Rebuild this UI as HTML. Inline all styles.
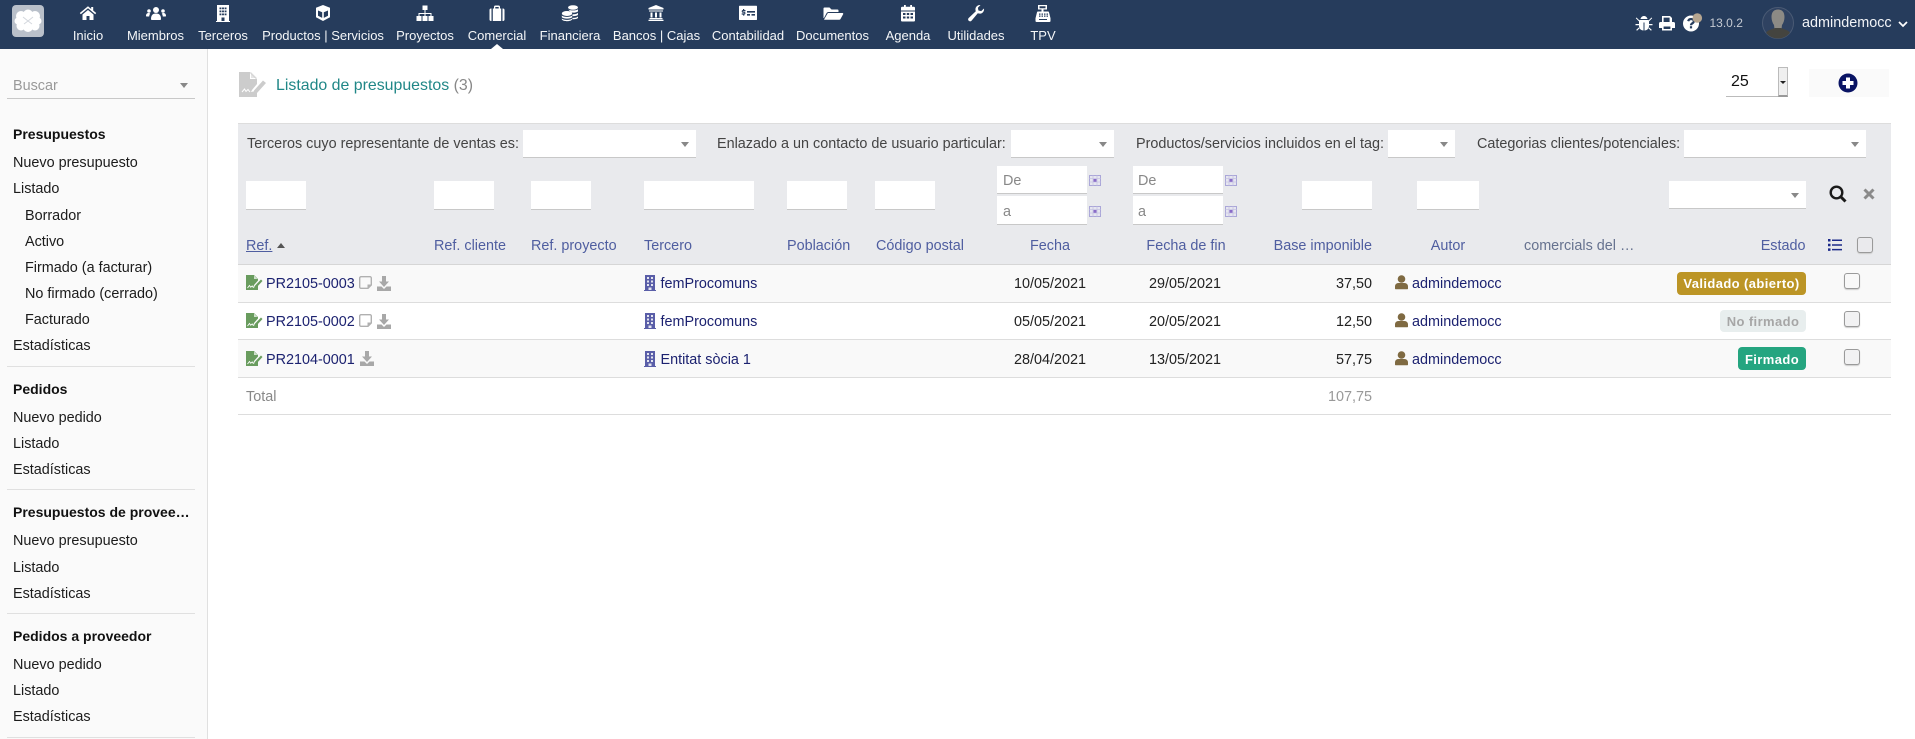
<!DOCTYPE html>
<html lang="es"><head><meta charset="utf-8"><title>Listado de presupuestos</title>
<style>
html,body{margin:0;padding:0;background:#fff}
#p{position:relative;width:1915px;height:739px;overflow:hidden;font-family:"Liberation Sans",sans-serif;font-size:14.4px;color:#222;background:#fff}
.a{position:absolute}
.t{position:absolute;white-space:nowrap;line-height:20px;height:20px;margin-top:1px}
.n{color:#f4f6f8;font-size:13px;transform:translateX(-50%);top:26px;margin-top:0}
.i{position:absolute}
.s{color:#1b1b1b;left:13px}.s2{color:#1b1b1b;left:25px}.b{font-weight:bold;color:#111;left:13px;font-size:14px;margin-top:0}
.sep{position:absolute;left:7px;width:188px;height:1px;background:#e0e0e0}
.inp{position:absolute;background:#fff;border-bottom:1px solid #c8c8c8;box-sizing:border-box}
.ar{position:absolute;width:0;height:0;border-left:4px solid transparent;border-right:4px solid transparent;border-top:5px solid #888}
.h{color:#4f5ea0}
.lnk{color:#1c2270}
.c{transform:translateX(-50%)}.r{transform:translateX(-100%)}
.cb{position:absolute;width:14px;height:14px;border:1px solid #9a9a9a;border-radius:3px;background:#f2f2f3;box-shadow:0 1px 1px #ccc}
.bd{position:absolute;box-sizing:border-box;border-radius:4px;font-weight:bold;font-size:13px;letter-spacing:.4px;text-align:center;color:#fff}
.ph{color:#888}
</style></head><body><div id="p">

<!-- top bar -->
<div class="a" style="left:0;top:0;width:1915px;height:49px;background:#263c5c"></div>
<svg class="i" style="left:12px;top:5px" width="32" height="32" viewBox="0 0 32 32"><rect width="32" height="32" rx="4" fill="#b9c0ca"/><g fill="#fff"><circle cx="9" cy="11" r="5"/><circle cx="16" cy="9.500" r="5"/><circle cx="23" cy="11" r="5"/><circle cx="26" cy="16" r="3.500"/><circle cx="6" cy="16" r="3.500"/><circle cx="9" cy="21" r="4.500"/><circle cx="16" cy="22" r="5"/><circle cx="23" cy="21" r="4.500"/><rect x="8" y="10" width="16" height="12"/></g><path d="M11 12l5 4 5-4M12 19l4-3 4 3" fill="none" stroke="#d4d8de" stroke-width="1"/></svg>

<svg class="i" style="left:78px;top:3px" width="20" height="20" viewBox="0 0 20 20" fill="#fff"><path d="M10 3.200L1.800 10l1 1.200L10 5.300l7.200 5.900 1-1.200-3-2.500V4h-2v2z"/><path d="M4.500 11.500L10 7l5.500 4.500V17h-4v-4h-3v4h-4z"/></svg>
<svg class="i" style="left:145px;top:3px" width="22" height="20" viewBox="0 0 22 20" fill="#fff"><circle cx="11" cy="7" r="3"/><circle cx="4" cy="8" r="1.800"/><circle cx="18" cy="8" r="1.800"/><path d="M6 16c0-4 2-5.500 5-5.500s5 1.500 5 5.500c0 .7-.5 1-1 1H7c-.5 0-1-.3-1-1z"/><path d="M1 13c0-2 1-3 2.500-3 .7 0 1.200.2 1.700.6C4.500 11.500 4.300 12.500 4.200 13.500H2c-.6 0-1-.2-1-.5zM21 13c0-2-1-3-2.500-3-.7 0-1.200.2-1.700.6.700.9.900 1.900 1 2.900H20c.6 0 1-.2 1-.5z"/></svg>
<svg class="i" style="left:213px;top:3px" width="20" height="20" viewBox="0 0 20 20"><path fill="#fff" d="M4 2h12v16h1v1H3v-1h1z"/><path fill="#263c5c" d="M6.500 4.500h1.900v1.800H6.500zM9.050 4.500h1.900v1.800H9.050zM11.600 4.500h1.900v1.800h-1.900zM6.500 7.500h1.900v1.800H6.500zM9.050 7.500h1.900v1.800H9.050zM11.600 7.500h1.900v1.800h-1.900zM6.500 10.500h1.900v1.800H6.500zM9.050 10.500h1.900v1.800H9.050zM11.600 10.500h1.900v1.800h-1.900zM8.500 14.500h3V18h-3z"/></svg>
<svg class="i" style="left:313px;top:3px" width="20" height="20" viewBox="0 0 20 20"><path fill="#fff" d="M10 2l7 2.800v9.400L10 18l-7-3.800V4.800z"/><path fill="#263c5c" d="M5 7.500l4.200 1.700v5.700L5 12.800zM15 7.500l-4.200 1.700v5.700L15 12.800z"/></svg>
<svg class="i" style="left:415px;top:3px" width="20" height="20" viewBox="0 0 20 20" fill="#fff"><rect x="7.500" y="2.500" width="5" height="4.500"/><rect x="1.500" y="13" width="5" height="5"/><rect x="7.500" y="13" width="5" height="5"/><rect x="13.500" y="13" width="5" height="5"/><path d="M9.500 7h1v3h6v3h-1v-2h-5v2h-1v-2h-5v2h-1v-3h6z"/></svg>
<svg class="i" style="left:487px;top:3px" width="20" height="20" viewBox="0 0 20 20" fill="#fff"><path d="M2.500 7c0-1 .7-1.500 1.500-1.500h.5V18H4c-1 0-1.500-.7-1.500-1.500zM17.500 7c0-1-.7-1.500-1.500-1.500h-.5V18h.5c1 0 1.500-.7 1.500-1.500zM5.800 5.500H7V4c0-1 .5-1.500 1.500-1.500h3c1 0 1.500.5 1.500 1.500v1.500h1.200V18H5.800zM8.300 5.500h3.400V4H8.300z"/></svg>
<svg class="i" style="left:560px;top:3px" width="20" height="20" viewBox="0 0 20 20"><g fill="#fff"><ellipse cx="13" cy="4.500" rx="5" ry="2.300"/><path d="M8 6.200c1 1.400 8.500 1.800 10 0v2c-.8 1.300-5 1.700-7 1.200zM12.500 11.200c2.500.2 4.700-.3 5.500-1.400v2c-.7 1-3 1.500-5.500 1.300zM12.500 14.800c2.500.2 4.700-.3 5.500-1.400v1.500c-.7 1-3 1.500-5.500 1.300z"/><ellipse cx="7" cy="10.500" rx="5.200" ry="2.500"/><path d="M1.800 12.400c1.200 2 9.200 2 10.400 0v1.700c-1.200 2-9.200 2-10.400 0zM1.800 15.400c1.200 2 9.200 2 10.400 0v1c-1.200 2.400-9.200 2.400-10.400 0z"/></g></svg>
<svg class="i" style="left:646px;top:3px" width="20" height="20" viewBox="0 0 20 20" fill="#fff"><path d="M10 2l7.500 3v1.500h-15V5zM3 7.500h14v1H3zM4.500 9.500h2v5h-2zM9 9.500h2v5H9zM13.500 9.500h2v5h-2zM3.500 15h13v1.300h-13zM2.500 16.800h15V18h-15z"/></svg>
<svg class="i" style="left:738px;top:3px" width="20" height="20" viewBox="0 0 20 20"><path fill="#fff" d="M1 3.500c0-.5.300-.8.800-.8h16.400c.5 0 .8.300.8.800v12.700c0 .5-.3.800-.8.800H1.800c-.5 0-.8-.3-.8-.8z"/><path fill="#263c5c" d="M9 8h8v1.600H9zM9 11h3v1.600H9zM13.500 11H17v1.600h-3.500z"/><path fill="#263c5c" d="M5 6h1.200v1h1.300v1.200H5c-.3 0-.3.600 0 .6h1.300c1.600 0 1.600 2.800 0 2.800v1H5.100v-1H3.700v-1.200h2.500c.3 0 .3-.6 0-.6H5c-1.700 0-1.700-2.800 0-2.800z"/></svg>
<svg class="i" style="left:822px;top:3px" width="22" height="20" viewBox="0 0 22 20" fill="#fff"><path d="M1.500 15V5.500c0-.6.400-1 1-1h5l2 2h6c.6 0 1 .4 1 1V9H6.500c-.9 0-1.600.5-2 1.300L2 15z"/><path d="M6.500 10h14c.6 0 .9.600.7 1.100L18.500 16c-.2.400-.6.700-1.100.7H2.500c-.3 0-.4-.3-.3-.5l3.200-5.500c.2-.4.600-.7 1.100-.7z"/></svg>
<svg class="i" style="left:898px;top:3px" width="20" height="20" viewBox="0 0 20 20"><path fill="#fff" d="M3 5c0-.8.600-1.200 1.200-1.200H6V2h1.800v1.800h4.400V2H14v1.800h1.800c.6 0 1.200.4 1.200 1.200v2.500H3zM3 8.500h14v9c0 .6-.5 1-1 1H4c-.5 0-1-.4-1-1z"/><path fill="#263c5c" d="M5 10h2.500v2H5zM8.800 10h2.400v2H8.800zM12.500 10H15v2h-2.500zM5 13.500h2.500v2H5zM8.800 13.500h2.400v2H8.800zM12.500 13.500H15v2h-2.500z"/></svg>
<svg class="i" style="left:966px;top:3px" width="20" height="20" viewBox="0 0 20 20"><path fill="#fff" d="M18 5.500c.3 2-.6 3.800-2.300 4.700-1.300.6-2.700.5-3.900 0L5.500 17.700c-.8.800-2 .8-2.800.1-.8-.8-.8-2 0-2.800L9.800 8.200c-.5-1.200-.5-2.600.1-3.800C10.800 2.700 12.600 1.800 14.500 2l-2.600 2.700.5 2.800 2.800.6z"/></svg>
<svg class="i" style="left:1033px;top:3px" width="20" height="20" viewBox="0 0 20 20"><path fill="#fff" d="M5 2h9v4.500h-3.500v2H15c.5 0 .9.300 1 .8l1.500 6v2.700c0 .5-.5 1-1 1h-13c-.5 0-1-.5-1-1v-2.700l1.500-6c.1-.5.500-.8 1-.8h3.500v-2H5z"/><path fill="#263c5c" d="M6.500 3.300h6v1.900h-6zM6 10.500h1.500v1.200H6zM8.500 10.500H10v1.200H8.500zM11 10.500h1.500v1.200H11zM13.500 10.500H15v1.200h-1.500zM6 12.500h1.500v1.200H6zM8.500 12.500H10v1.200H8.500zM11 12.500h1.500v1.200H11zM13.500 12.500H15v1.200h-1.500zM6 16h8v1H6z"/></svg>

<div class="t n" style="left:88px">Inicio</div>
<div class="t n" style="left:155.500px">Miembros</div>
<div class="t n" style="left:223px">Terceros</div>
<div class="t n" style="left:323px">Productos | Servicios</div>
<div class="t n" style="left:425px">Proyectos</div>
<div class="t n" style="left:497px">Comercial</div>
<div class="t n" style="left:570px">Financiera</div>
<div class="t n" style="left:656.500px">Bancos | Cajas</div>
<div class="t n" style="left:748px">Contabilidad</div>
<div class="t n" style="left:832.500px">Documentos</div>
<div class="t n" style="left:908px">Agenda</div>
<div class="t n" style="left:976px">Utilidades</div>
<div class="t n" style="left:1043px">TPV</div>
<div class="a" style="left:491px;top:44px;width:0;height:0;border-left:6px solid transparent;border-right:6px solid transparent;border-bottom:5px solid #fff"></div>

<!-- top right -->
<svg class="i" style="left:1635px;top:14px" width="18" height="18" viewBox="0 0 18 18" fill="#fff"><path d="M5.500 5C6 3 7.500 2 9 2s3 1 3.500 3zM5 6h8c.6 0 1 .4 1 1v5c0 2.500-2 4.500-4.500 4.500V8.500h-1v8C6 16.500 4 14.500 4 12V7c0-.6.400-1 1-1z"/><path d="M1.500 3.500l3 3 -.7.700-3-3zM16.500 3.500l-3 3 .7.700 3-3zM.5 10h3.500v1.200H.5zM14 10h3.500v1.200H14zM3.800 13.500l.7.900L2 16.800l-.8-.9zM14.200 13.500l-.7.900 2.500 2.400.8-.9z"/></svg>
<svg class="i" style="left:1658px;top:14px" width="18" height="18" viewBox="0 0 18 18"><path fill="#fff" d="M4 2h8l2 2v4h1.500c1 0 1.500.7 1.500 1.500V14h-3v2.500H4V14H1V9.500C1 8.700 1.500 8 2.500 8H4z"/><path fill="#263c5c" d="M5.600 3.600h6v4.400h-6zM5.600 12.500h6.800v2.500H5.600z"/></svg>
<svg class="i" style="left:1681px;top:13px" width="24" height="20" viewBox="0 0 24 20"><circle cx="10" cy="10.500" r="8" fill="#fff"/><path fill="none" stroke="#263c5c" stroke-width="2.200" d="M7.200 8.200c.4-1.600 1.600-2.200 2.900-2.200 1.500 0 2.700.9 2.700 2.200 0 2.200-2.800 2-2.800 4"/><rect x="8.900" y="13.200" width="2.200" height="2.200" fill="#263c5c"/><circle cx="16.300" cy="5" r="4.800" fill="#b5a590"/></svg>
<div class="t" style="left:1709.500px;top:13px;font-size:12px;color:#c5cad2;margin-top:0">13.0.2</div>
<svg class="i" style="left:1762px;top:7px" width="32" height="32" viewBox="0 0 32 32"><defs><clipPath id="cc"><circle cx="16" cy="16" r="15.500"/></clipPath></defs><circle cx="16" cy="16" r="15.500" fill="#2f4261" stroke="#4a5a74"/><g clip-path="url(#cc)"><path fill="#8c8a85" d="M9.500 10c0-5 2.500-7.500 6.500-7.500s6.500 2.500 6.500 7.500c0 3-1 6-2.500 8l-.5 4h-7l-.5-4c-1.500-2-2.500-5-2.500-8z"/><path fill="#44443f" d="M3 32l1-6c1-3 6-3.500 9-5h6c3 1.500 8 2 9 5l1 6z"/></g></svg>
<div class="t" style="left:1802px;top:13px;color:#f2f4f7;margin-top:0">admindemocc</div>
<svg class="i" style="left:1898px;top:19px" width="10" height="10" viewBox="0 0 10 10"><path d="M1 3l4 4 4-4" fill="none" stroke="#fff" stroke-width="1.700"/></svg>

<!-- sidebar -->
<div class="a" style="left:0;top:49px;width:207px;height:690px;background:#fafafa;border-right:1px solid #e0e0e0"></div>
<div class="t" style="left:13px;top:75px;color:#999">Buscar</div>
<div class="ar" style="left:180px;top:83px"></div>
<div class="a" style="left:7px;top:98px;width:188px;height:1px;background:#c8c8c8"></div>
<div class="t b" style="top:124px">Presupuestos</div>
<div class="t s" style="top:152px">Nuevo presupuesto</div>
<div class="t s" style="top:178px">Listado</div>
<div class="t s2" style="top:205px">Borrador</div>
<div class="t s2" style="top:231px">Activo</div>
<div class="t s2" style="top:257px">Firmado (a facturar)</div>
<div class="t s2" style="top:283px">No firmado (cerrado)</div>
<div class="t s2" style="top:309px">Facturado</div>
<div class="t s" style="top:335px">Estadísticas</div>
<div class="sep" style="top:366px"></div>
<div class="t b" style="top:379px">Pedidos</div>
<div class="t s" style="top:407px">Nuevo pedido</div>
<div class="t s" style="top:433px">Listado</div>
<div class="t s" style="top:459px">Estadísticas</div>
<div class="sep" style="top:489px"></div>
<div class="t b" style="top:502px">Presupuestos de provee…</div>
<div class="t s" style="top:530px">Nuevo presupuesto</div>
<div class="t s" style="top:557px">Listado</div>
<div class="t s" style="top:583px">Estadísticas</div>
<div class="sep" style="top:613px"></div>
<div class="t b" style="top:626px">Pedidos a proveedor</div>
<div class="t s" style="top:654px">Nuevo pedido</div>
<div class="t s" style="top:680px">Listado</div>
<div class="t s" style="top:706px">Estadísticas</div>
<div class="sep" style="top:737px"></div>

<!-- title -->
<svg class="i" style="left:239px;top:72px" width="28" height="25" viewBox="0 0 28 25"><path fill="#ccc" d="M0 0h11l7 7v5l-5 6 -1 2 5-1 1 0v6H0z"/><path fill="#fff" d="M11 1l6 6h-6z"/><path fill="#ccc" d="M12 0l6 6h-6z" opacity=".5"/><path fill="#ccc" d="M24 8.500l3 2.500-9 10-4 1.500 1-4zM2 20l3-3 2 2 2-2 2 2" /><path fill="none" stroke="#fff" stroke-width="1" d="M3 20l2.500-3 1.500 2.500 2-2 2 2.500"/></svg>
<div class="t" style="left:276px;top:76px;font-size:15.900px;color:#208787;margin-top:0">Listado de presupuestos <span style="color:#888">(3)</span></div>

<div class="t" style="left:1731px;top:72px;font-size:16px;color:#111;margin-top:0">25</div>
<div class="a" style="left:1726px;top:96px;width:62px;height:1px;background:#bbb"></div>
<div class="a" style="left:1778px;top:67px;background:#efefef;border:1px solid #bbb;border-bottom:2px solid #999;width:8px;height:27px"></div>
<div class="a" style="left:1780px;top:81px;width:0;height:0;border-left:3px solid transparent;border-right:3px solid transparent;border-top:3px solid #222"></div>
<div class="a" style="left:1809px;top:69px;width:80px;height:28px;background:#fafafa"></div>
<svg class="i" style="left:1838px;top:73px" width="20" height="20" viewBox="0 0 20 20"><circle cx="10" cy="10" r="9.500" fill="#0a1464"/><path fill="#fff" d="M8 4.500h4V8h3.500v4H12v3.500H8V12H4.500V8H8z"/></svg>

<!-- filter area -->
<div class="a" style="left:238px;top:123px;width:1653px;height:141px;background:#e9eaed;border-top:1px solid #ddd;box-sizing:border-box"></div>

<div class="t" style="left:247px;top:133px;color:#444">Terceros cuyo representante de ventas es:</div>
<div class="inp" style="left:523px;top:130px;width:173px;height:28px"></div><div class="ar" style="left:681px;top:142px"></div>
<div class="t" style="left:717px;top:133px;color:#444">Enlazado a un contacto de usuario particular:</div>
<div class="inp" style="left:1011px;top:130px;width:103px;height:28px"></div><div class="ar" style="left:1099px;top:142px"></div>
<div class="t" style="left:1136px;top:133px;color:#444">Productos/servicios incluidos en el tag:</div>
<div class="inp" style="left:1388px;top:130px;width:67px;height:28px"></div><div class="ar" style="left:1440px;top:142px"></div>
<div class="t" style="left:1477px;top:133px;color:#444">Categorias clientes/potenciales:</div>
<div class="inp" style="left:1684px;top:130px;width:182px;height:28px"></div><div class="ar" style="left:1851px;top:142px"></div>

<div class="inp" style="left:246px;top:181px;width:60px;height:29px"></div>
<div class="inp" style="left:434px;top:181px;width:60px;height:29px"></div>
<div class="inp" style="left:531px;top:181px;width:60px;height:29px"></div>
<div class="inp" style="left:644px;top:181px;width:110px;height:29px"></div>
<div class="inp" style="left:787px;top:181px;width:60px;height:29px"></div>
<div class="inp" style="left:875px;top:181px;width:60px;height:29px"></div>
<div class="inp" style="left:1302px;top:181px;width:70px;height:29px"></div>
<div class="inp" style="left:1417px;top:181px;width:62px;height:29px"></div>
<div class="inp" style="left:1669px;top:181px;width:137px;height:28px"></div><div class="ar" style="left:1791px;top:193px"></div>

<div class="inp" style="left:997px;top:166px;width:90px;height:28px"></div><div class="t ph" style="left:1003px;top:170px">De</div>
<div class="inp" style="left:997px;top:196px;width:90px;height:29px"></div><div class="t ph" style="left:1003px;top:201px">a</div>
<div class="inp" style="left:1133px;top:166px;width:90px;height:28px"></div><div class="t ph" style="left:1138px;top:170px">De</div>
<div class="inp" style="left:1133px;top:196px;width:90px;height:29px"></div><div class="t ph" style="left:1138px;top:201px">a</div>

<svg width="0" height="0" style="position:absolute"><defs><g id="cal"><rect x=".5" y=".5" width="11" height="10" fill="#e6e6f0" stroke="#aaa6d8"/><path d="M.5 3.500h11M.5 7h11M4 .5v10M8 .5v10" stroke="#c6c4e2" stroke-width=".8" fill="none"/><rect x="4.500" y="4" width="3" height="2.800" fill="#8a6cc8"/></g>
<g id="doc"><path fill="#699c5e" d="M0 0h8l4 4v1.500L8 10l-1 3 3-1 2-2v5H0z"/><path fill="#fff" d="M8 .5l3.500 3.500H8z" opacity=".7"/><path fill="#699c5e" d="M15 4.500l1.500 1.500-6 6.500-2.500.8.700-2.300z"/><path fill="none" stroke="#fff" stroke-width=".9" d="M1.500 13l2-2.500 1.200 1.700 1.500-1.300 1 1.500"/></g>
<g id="note"><path fill="none" stroke="#b0b0b0" stroke-width="1.400" d="M2 .7h9c.7 0 1.300.6 1.300 1.300v7l-3.300 3.300H2c-.7 0-1.300-.6-1.300-1.300V2C.7 1.300 1.300.7 2 .7z"/><path fill="#b0b0b0" d="M8.500 12.500V8.500h4z"/></g>
<g id="dl"><path fill="#a8a8a8" d="M5 0h4v5.500h3L7 11 2 5.500h3z"/><path fill="#a8a8a8" d="M0 10.500h4.500L7 13l2.500-2.500H14V15H0z"/></g>
<g id="bld"><path fill="#5a5ea8" d="M1 0h10v15h1v1H0v-1h1z"/><path fill="#e4e6f0" d="M3 2h2v2H3zM7 2h2v2H7zM3 5.500h2v2H3zM7 5.500h2v2H7zM3 9h2v2H3zM7 9h2v2H7zM4.500 12.500h3V15h-3z"/></g>
<g id="usr"><circle cx="6.500" cy="4" r="3.800" fill="#7f6a42"/><path fill="#7f6a42" d="M0 13.500v-2c0-2 1.500-3.500 3.500-3.500h6c2 0 3.500 1.500 3.500 3.500v2c0 .5-.4.800-1 .8H1c-.6 0-1-.3-1-.8z"/></g></defs></svg>
<svg class="i" style="left:1089px;top:175px" width="12" height="11"><use href="#cal"/></svg>
<svg class="i" style="left:1089px;top:206px" width="12" height="11"><use href="#cal"/></svg>
<svg class="i" style="left:1225px;top:175px" width="12" height="11"><use href="#cal"/></svg>
<svg class="i" style="left:1225px;top:206px" width="12" height="11"><use href="#cal"/></svg>

<svg class="i" style="left:1829px;top:185px" width="18" height="18" viewBox="0 0 18 18"><circle cx="7.500" cy="7.500" r="5.800" fill="none" stroke="#1a1a1a" stroke-width="2.400"/><path d="M11.500 11.500l5 5" stroke="#1a1a1a" stroke-width="3"/></svg>
<svg class="i" style="left:1863px;top:188px" width="12" height="12" viewBox="0 0 12 12"><path d="M1.500 1.500l9 9M10.500 1.500l-9 9" stroke="#8a8a8a" stroke-width="3"/></svg>

<!-- header labels -->
<div class="t h" style="left:246px;top:234.500px;text-decoration:underline">Ref.</div>
<div class="a" style="left:277px;top:243px;width:0;height:0;border-left:4.500px solid transparent;border-right:4.500px solid transparent;border-bottom:5px solid #555"></div>
<div class="t h" style="left:434px;top:234.500px">Ref. cliente</div>
<div class="t h" style="left:531px;top:234.500px">Ref. proyecto</div>
<div class="t h" style="left:644px;top:234.500px">Tercero</div>
<div class="t h" style="left:787px;top:234.500px">Población</div>
<div class="t h" style="left:876px;top:234.500px">Código postal</div>
<div class="t h c" style="left:1050px;top:234.500px">Fecha</div>
<div class="t h c" style="left:1186px;top:234.500px">Fecha de fin</div>
<div class="t h r" style="left:1372px;top:234.500px">Base imponible</div>
<div class="t h c" style="left:1448px;top:234.500px">Autor</div>
<div class="t" style="left:1524px;top:234.500px;color:#66728f">comercials del …</div>
<div class="t h r" style="left:1805.500px;top:234.500px">Estado</div>
<svg class="i" style="left:1828px;top:238px" width="14" height="14" viewBox="0 0 14 14"><path fill="#1c2a8a" d="M0 1h2.500v2.500H0zM0 5.700h2.500v2.500H0zM0 10.400h2.500v2.500H0zM4 1.500h10V3H4zM4 6.200h10v1.500H4zM4 10.900h10v1.500H4z"/></svg>
<div class="cb" style="left:1857px;top:237px;background:#eaeaed"></div>

<!-- rows -->
<div class="a" style="left:238px;top:264px;width:1653px;height:1px;background:#d6d6d6"></div>
<div class="a" style="left:238px;top:265px;width:1653px;height:37px;background:#f9f9f9"></div>
<div class="a" style="left:238px;top:302px;width:1653px;height:1px;background:#ddd"></div>
<div class="a" style="left:238px;top:339px;width:1653px;height:1px;background:#ddd"></div>
<div class="a" style="left:238px;top:340px;width:1653px;height:37px;background:#f9f9f9"></div>
<div class="a" style="left:238px;top:377px;width:1653px;height:1px;background:#ddd"></div>
<div class="a" style="left:238px;top:414px;width:1653px;height:1px;background:#ddd"></div>

<!-- row 1 -->
<svg class="i" style="left:246px;top:275px" width="17" height="16"><use href="#doc"/></svg>
<div class="t lnk" style="left:266px;top:272.500px">PR2105-0003</div>
<svg class="i" style="left:359px;top:276px" width="14" height="14"><use href="#note"/></svg>
<svg class="i" style="left:377px;top:276px" width="14" height="16"><use href="#dl"/></svg>
<svg class="i" style="left:644px;top:275px" width="12" height="16"><use href="#bld"/></svg>
<div class="t lnk" style="left:660.500px;top:272.500px">femProcomuns</div>
<div class="t c" style="left:1050px;top:272.500px">10/05/2021</div>
<div class="t c" style="left:1185px;top:272.500px">29/05/2021</div>
<div class="t r" style="left:1372px;top:272.500px">37,50</div>
<svg class="i" style="left:1395px;top:275px" width="13" height="15"><use href="#usr"/></svg>
<div class="t lnk" style="left:1412px;top:272.500px">admindemocc</div>
<div class="bd" style="left:1677px;top:272px;width:129px;height:23px;line-height:24px;background:#bc9526">Validado (abierto)</div>
<div class="cb" style="left:1844px;top:273px;background:#f8f8f8"></div>

<!-- row 2 -->
<svg class="i" style="left:246px;top:313px" width="17" height="16"><use href="#doc"/></svg>
<div class="t lnk" style="left:266px;top:310.500px">PR2105-0002</div>
<svg class="i" style="left:359px;top:314px" width="14" height="14"><use href="#note"/></svg>
<svg class="i" style="left:377px;top:314px" width="14" height="16"><use href="#dl"/></svg>
<svg class="i" style="left:644px;top:313px" width="12" height="16"><use href="#bld"/></svg>
<div class="t lnk" style="left:660.500px;top:310.500px">femProcomuns</div>
<div class="t c" style="left:1050px;top:310.500px">05/05/2021</div>
<div class="t c" style="left:1185px;top:310.500px">20/05/2021</div>
<div class="t r" style="left:1372px;top:310.500px">12,50</div>
<svg class="i" style="left:1395px;top:313px" width="13" height="15"><use href="#usr"/></svg>
<div class="t lnk" style="left:1412px;top:310.500px">admindemocc</div>
<div class="bd" style="left:1720px;top:310px;width:86px;height:22px;line-height:24px;background:#e8eeee;color:#a6a6a6">No firmado</div>
<div class="cb" style="left:1844px;top:311px"></div>

<!-- row 3 -->
<svg class="i" style="left:246px;top:351px" width="17" height="16"><use href="#doc"/></svg>
<div class="t lnk" style="left:266px;top:348.500px">PR2104-0001</div>
<svg class="i" style="left:360px;top:351px" width="14" height="16"><use href="#dl"/></svg>
<svg class="i" style="left:644px;top:351px" width="12" height="16"><use href="#bld"/></svg>
<div class="t lnk" style="left:660.500px;top:348.500px">Entitat sòcia 1</div>
<div class="t c" style="left:1050px;top:348.500px">28/04/2021</div>
<div class="t c" style="left:1185px;top:348.500px">13/05/2021</div>
<div class="t r" style="left:1372px;top:348.500px">57,75</div>
<svg class="i" style="left:1395px;top:351px" width="13" height="15"><use href="#usr"/></svg>
<div class="t lnk" style="left:1412px;top:348.500px">admindemocc</div>
<div class="bd" style="left:1738px;top:347px;width:68px;height:23px;line-height:25px;background:#25a580">Firmado</div>
<div class="cb" style="left:1844px;top:349px"></div>

<!-- total -->
<div class="t" style="left:246px;top:386px;color:#888">Total</div>
<div class="t r" style="left:1372px;top:386px;color:#999">107,75</div>

</div></body></html>
